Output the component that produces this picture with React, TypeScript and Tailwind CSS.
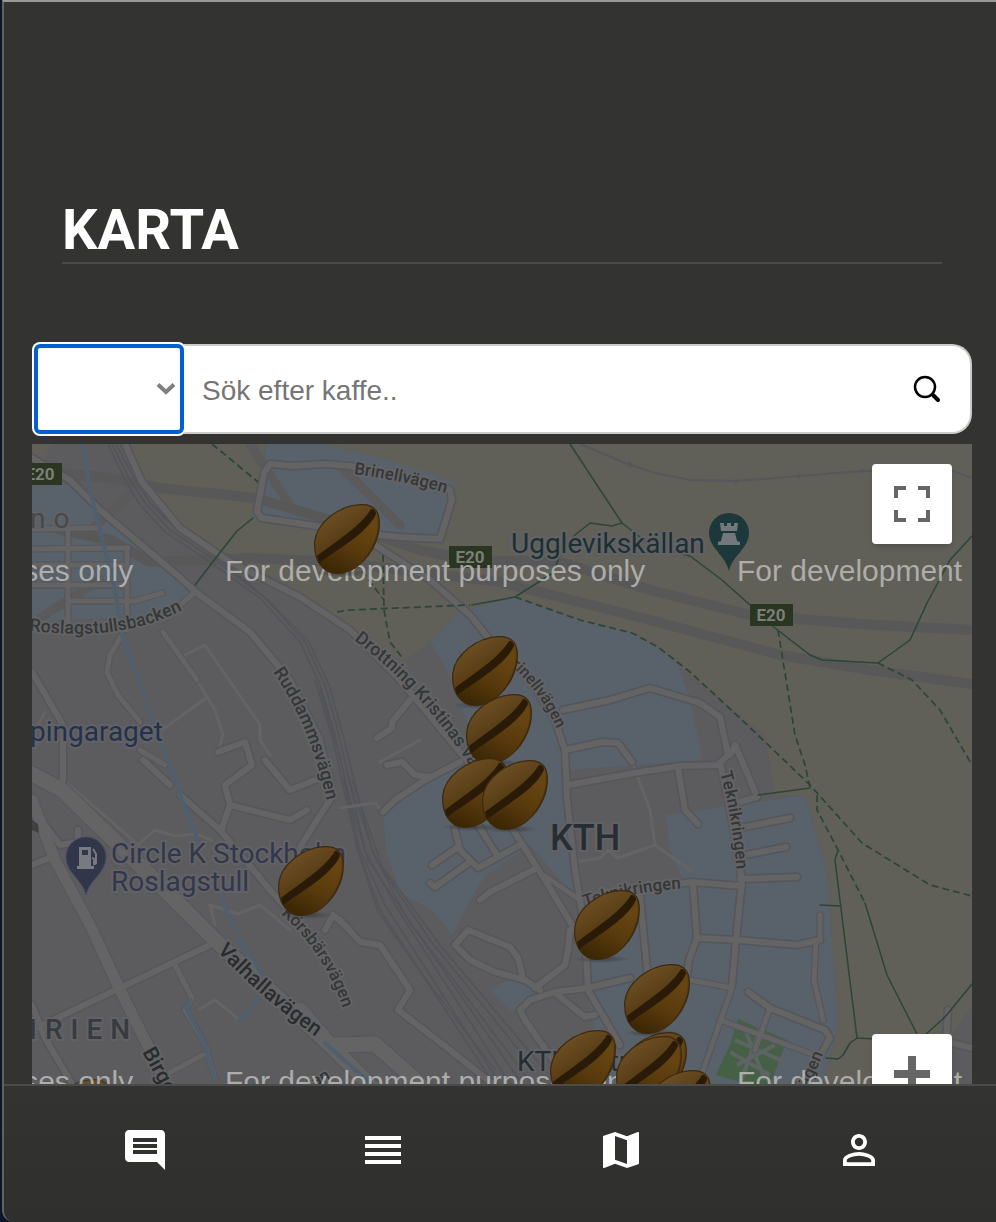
import React from "react";
import { MdComment, MdMap, MdPersonOutline, MdReorder } from "react-icons/md";

const CAMPUS = [
  "32,485 75,484 195,590 180,603 150,616 32,622",
  "266,444 325,444 345,450 380,457 457,482 443,545 350,534 250,520 262,480",
  "430,641 460,612 515,597 580,620 632,633 658,647 678,665 690,700 703,760 566,770 585,905 560,880 530,845 486,875 473,895 452,935 432,910 400,893 386,850 383,813 430,777 475,750 455,685",
  "490,990 512,978 540,992 512,1012",
  "666,815 805,795 828,877 838,1027 822,1084 600,1084 590,1000 580,930 580,900 650,890 683,880 670,850",
];

const PARK = [
  "128,444 266,444 262,480 250,520 350,534 443,545 457,482 345,450 325,444 972,444 972,1005 945,1045 940,1084 822,1084 838,1027 828,877 805,795 775,795 765,735 735,712 678,665 658,647 515,597 460,612 430,641 404,662 345,625 300,592 178,528 142,482",
  "32,444 50,444 45,462 32,458",
];

const HIGHWAYS = [
  "60,473 110,478 160,488 255,498 330,520 420,550 470,560 560,562 650,590 750,615 860,624 972,630",
  "60,530 110,540 150,562 250,558 340,562 400,570 500,582 650,620 780,655 870,670 972,684",
];

const FOOT_HIGHWAYS = ["250,444 290,505", "340,466 400,525", "40,618 100,580", "85,535 130,495"];

const RAILS = [
  "108,444 125,480 140,505 165,532 210,562 260,598 300,642 320,685 335,735 345,780 360,850 385,905 500,1084",
  "112,444 129,478 145,503 170,530 215,560 265,598 305,642 325,685 339,735 349,780 365,850 395,905 510,1084",
  "116,444 134,478 150,503 175,528 220,560 268,600 309,642 329,685 343,735 354,780 372,850 405,915 522,1084",
  "320,690 338,750 350,800 368,860 412,925 532,1084",
  "315,680 333,740 344,790 358,850 380,910 488,1075",
  "344,780 356,845 378,912 430,985 495,1070",
  "349,780 376,860 430,940 535,1070",
  "352,780 382,866 440,945 545,1070",
];

const WIDE_ROADS = [
  "32,774 62,790 95,822 160,885 215,940 330,1045 375,1090",
  "300,1010 330,1045 375,1044 420,1084",
];

const AVENUES = ["32,800 55,860 90,925 120,990 150,1050 168,1090"];

const ROADS = [
  "32,458 70,480 100,510 177,575 197,593 250,632 290,680 320,740 333,795 300,847",
  "125,444 142,482 180,528 230,562 300,597 350,630 400,680 475,770 510,825 545,880 575,930",
  "350,466 325,464 292,466 270,464 264,473 257,512 262,518 310,525 350,532 400,537 440,539 452,500 450,490 440,485 350,466",
  "375,545 430,580 470,615 490,640 530,680 555,720 565,750 567,800 575,870 585,930 588,990 620,1045",
  "32,808 60,845 78,842 78,830",
  "32,865 52,857",
  "32,1030 120,988 210,945",
  "180,795 220,830 270,890 320,945",
  "143,760 170,785",
  "222,828 230,805 225,785 252,765 245,742 218,752",
  "230,805 290,820 307,810",
  "265,760 290,790 315,780",
  "563,710 610,700 650,688 700,703 720,717 728,755 718,765 680,766 640,772 568,785",
  "565,750 603,742 618,743 632,762",
  "720,762 732,820 742,880 736,940 732,985",
  "740,828 790,818",
  "740,856 786,847",
  "740,879 797,877",
  "675,885 690,882 742,886",
  "693,885 697,938 689,960 685,990",
  "697,938 738,940 797,945 820,940",
  "748,992 770,1008 825,1030 830,1038 815,1065 800,1084",
  "678,768 685,810 698,824",
  "730,755 735,745 748,775 757,797 740,802",
  "340,920 360,942 380,945 410,990 398,1010 450,1050 500,1090",
  "455,945 468,930 510,947 518,958 523,978",
  "455,945 470,960 495,972 525,980 540,990",
  "570,930 568,950 565,965 535,988",
  "630,978 588,988 555,992 530,1000 520,1010 525,1020 560,1070",
  "555,993 585,1017 595,1015",
  "480,900 490,892 537,868",
  "430,883 435,887 470,862",
  "432,865 458,847",
  "455,830 460,850 478,868 520,845",
  "475,820 497,855",
  "640,895 647,970",
  "410,700 392,722 392,728 377,738",
  "387,765 402,762 415,775 430,777",
  "383,812 395,800 425,780 460,762",
  "325,930 333,915 350,930",
  "32,672 63,725 63,780",
  "32,1005 45,1038 72,1084",
  "945,1060 948,1010",
  "952,1043 972,1048",
];

const STREETS = [
  "32,529 97,528",
  "32,549 128,548",
  "32,565 125,565",
  "32,585 127,585",
  "70,601 135,601 162,593",
  "68,529 68,622",
  "127,548 127,630",
  "195,592 165,618",
  "122,635 110,655 107,672 118,695 140,722",
  "163,632 197,680",
  "140,750 165,765",
  "175,965 192,998 185,1010 203,1040 215,1078",
  "203,1055 165,1075",
  "816,940 814,980 823,1020",
  "820,940 820,915",
  "690,980 732,988 720,1022 705,1065 700,1078",
  "720,1020 820,1057",
  "770,1008 755,1050",
  "545,876 580,900",
];

const ALLEYS = [
  "185,655 205,645 260,725 260,740 270,755",
  "197,680 215,710 223,735 218,752",
  "206,698 162,730",
  "65,782 110,820 138,845 155,830 175,836 195,834 212,840",
  "340,808 375,803 383,812",
  "632,762 650,810 655,845 690,870",
  "575,862 600,858 608,850 618,858 655,845",
  "210,905 215,925",
  "210,905 238,914 260,905 290,930",
  "200,1009 215,1000 240,1020 260,998",
  "45,712 32,735",
  "380,762 420,740",
];

const WATER = [
  "82,444 90,490 115,590 122,635 145,697",
  "147,705 170,765 182,800 200,845",
  "220,895 235,930",
  "237,938 265,978",
  "240,1020 260,998",
  "190,1000 186,1008 203,1040 215,1078",
  "325,1043 378,1090",
];

const TRAILS = [
  "570,444 622,523 650,545 690,556 722,580 750,605 775,628 810,655 822,660 878,663 910,640 927,603 950,560 972,536",
  "472,605 515,597 553,573 562,550 575,535 590,523 612,526 622,523",
  "865,903 887,975 920,1040",
  "838,850 835,860 857,1038 875,1039",
  "820,905 840,906",
  "758,795 810,788",
  "826,1058 838,1059 843,1055 850,1043 857,1038",
  "925,1035 945,1017 972,984",
  "253,518 237,531 222,550 195,585",
];

const DASHED_TRAILS = [
  "515,597 580,620 632,633 658,647 690,672 740,718 810,785 862,843 930,885 972,896",
  "778,630 795,735 805,765 810,787",
  "878,663 912,680 940,710 972,765",
  "817,795 817,810 838,850 865,903",
  "212,444 258,482",
  "337,612 350,610 470,605",
  "383,555 384,610 390,642 404,660",
  "355,562 384,600",
];

const BEANS: [number, number][] = [
  [314, 504],
  [452, 636],
  [466, 694],
  [442, 758],
  [482, 760],
  [278, 846],
  [574, 890],
  [624, 964],
  [550, 1030],
  [621, 1032],
  [616, 1036],
  [645, 1070],
];

function Lines({ items, ...rest }: { items: string[] } & React.SVGProps<SVGGElement>) {
  return (
    <g fill="none" strokeLinecap="round" strokeLinejoin="round" {...rest}>
      {items.map((points) => (
        <polyline key={points} points={points} />
      ))}
    </g>
  );
}

function Shield({ x, y }: { x: number; y: number }) {
  return (
    <g>
      <rect x={x} y={y} width="43" height="22" fill="#2a3522" />
      <text x={x + 21} y={y + 17} textAnchor="middle" fontSize="17" fontWeight="700" fill="#7c7f78">
        E20
      </text>
    </g>
  );
}

function StreetMap() {
  return (
    <svg
      className="absolute inset-0 h-full w-full font-[Roboto,sans-serif]"
      viewBox="32 444 940 640"
      preserveAspectRatio="xMidYMin slice"
      role="img"
      aria-label="Karta"
    >
      <defs>
        <linearGradient id="bean-light" x1="0.2" y1="0.1" x2="0.7" y2="0.9">
          <stop offset="0" stopColor="#6f5026" />
          <stop offset="0.45" stopColor="#5a3f16" />
          <stop offset="1" stopColor="#402a08" />
        </linearGradient>
        <linearGradient id="bean-dark" x1="0.8" y1="0.2" x2="0.4" y2="1">
          <stop offset="0" stopColor="#664512" />
          <stop offset="0.5" stopColor="#593a0d" />
          <stop offset="1" stopColor="#3d2806" />
        </linearGradient>
        <radialGradient id="bean-shadow">
          <stop offset="0" stopColor="#222" stopOpacity="0.5" />
          <stop offset="1" stopColor="#222" stopOpacity="0" />
        </radialGradient>
        <g id="bean">
          <ellipse cx="28" cy="69" rx="28" ry="4" fill="url(#bean-shadow)" />
          <path
            d="M46 .7C56 0 63 3 65 14C67 30 60 48 46 60C36 69 22 72 13 67C4 61 0 51 .7 38C3 18 25 2 46 .7Z"
            fill="url(#bean-light)"
            stroke="#3d2a10"
            strokeWidth="1.2"
          />
          <path d="M62 8C66 20 64 40 46 60C36 69 22 72 13 67C8 64 5 60 3 55C30 39 50 28 62 8Z" fill="url(#bean-dark)" />
          <path d="M57 5C48 20 30 32 3 52L5 59C34 39 54 27 62 10C62 7 60 5 57 5Z" fill="#2a1b08" />
        </g>
        <path id="road-brinell-n" d="M354 474Q400 480 450 494" />
        <path id="road-brinell-s" d="M511 666Q541 692 558 732" />
        <path id="road-roslagstull" d="M29 631C80 636 135 638 194 604" />
        <path id="road-ruddamm" d="M273 672Q312 728 328 807" />
        <path id="road-drottning" d="M354 640C403 677 438 715 486 790" />
        <path id="road-korsbar" d="M281 914Q327 954 347 1020" />
        <path id="road-valhalla" d="M217 951Q262 1000 326 1044" />
        <path id="road-birger" d="M142 1052Q154 1073 184 1130" />
        <path id="road-teknik-e" d="M720 773Q732 813 737 875" />
        <path id="road-teknik-s" d="M585 907Q630 892 686 888" />
      </defs>

      <rect x="32" y="444" width="940" height="640" fill="#5c5c5e" />
      {PARK.map((points) => (
        <polygon key={points} points={points} fill="#605f58" />
      ))}
      {CAMPUS.map((points) => (
        <polygon key={points} points={points} fill="#59616a" />
      ))}
      <path d="M738 1019L787 1040L768 1090L716 1075L730 1045Z" fill="#456045" />
      <path
        d="M735 1040L785 1062M760 1028L740 1084M737 1065L775 1045M730 1052L770 1075M745 1030L765 1080"
        stroke="#5d6464"
        strokeWidth="4"
        fill="none"
      />

      <Lines items={FOOT_HIGHWAYS} stroke="#5a5a5b" strokeWidth={9} />
      <Lines items={HIGHWAYS} stroke="#585859" strokeWidth={10} />
      <Lines items={RAILS} stroke="#535459" strokeWidth={1.5} />
      <Lines
        items={["580,444 625,463 655,473 690,480 736,481 862,471 950,470 972,478"]}
        stroke="#56565c"
        strokeWidth={2}
      />
      <path d="M630 461v7M736 478v7M799 473v6M862 468v6" stroke="#56565c" strokeWidth="1.5" />

      <Lines items={ALLEYS} stroke="#646465" strokeWidth={3} />
      <Lines items={STREETS} stroke="#55555c" strokeWidth={7} />
      <Lines items={ROADS} stroke="#55555c" strokeWidth={9} />
      <Lines items={AVENUES} stroke="#55555c" strokeWidth={13} />
      <Lines items={WIDE_ROADS} stroke="#55555c" strokeWidth={17} />
      <Lines items={STREETS} stroke="#646465" strokeWidth={5} />
      <Lines items={ROADS} stroke="#646465" strokeWidth={6} />
      <Lines items={AVENUES} stroke="#646465" strokeWidth={11} />
      <Lines items={WIDE_ROADS} stroke="#646465" strokeWidth={15} />
      <Lines items={WATER} stroke="#4f5f6e" strokeWidth={4} />
      <Lines items={TRAILS} stroke="#2b4536" strokeWidth={1.5} />
      <Lines items={DASHED_TRAILS} stroke="#2b4536" strokeWidth={1.7} strokeDasharray="7 4" strokeLinecap="butt" />
      <path d="M32 820l6 4l1 9l-7-3z" fill="#3f4041" />

      <Shield x={19} y={463} />
      <Shield x={449} y={546} />
      <Shield x={750} y={604} />

      <g
        fill="#343638"
        stroke="#636365"
        strokeWidth="4"
        strokeLinejoin="round"
        paintOrder="stroke"
        fontSize="17"
        fontWeight="500"
      >
        <text><textPath href="#road-brinell-n">Brinellvägen</textPath></text>
        <text><textPath href="#road-brinell-s" fontSize="16">rinellvägen</textPath></text>
        <text><textPath href="#road-roslagstull" fontSize="18">Roslagstullsbacken</textPath></text>
        <text><textPath href="#road-ruddamm" fontSize="18">Ruddammsvägen</textPath></text>
        <text><textPath href="#road-drottning" fontSize="18">Drottning Kristinas väg</textPath></text>
        <text><textPath href="#road-korsbar">Körsbärsvägen</textPath></text>
        <text><textPath href="#road-valhalla" fontSize="21" fill="#292b2d">Valhallavägen</textPath></text>
        <text><textPath href="#road-birger" fontSize="21" fill="#292b2d">Birger</textPath></text>
        <text><textPath href="#road-teknik-e">Teknikringen</textPath></text>
        <text><textPath href="#road-teknik-s">Teknikringen</textPath></text>
        <text transform="translate(802 1104) rotate(-67)">svägen</text>
        <text transform="translate(302 1094) rotate(-28)">stan</text>
      </g>

      <g stroke="#626266" strokeWidth="4" strokeLinejoin="round" paintOrder="stroke" fontSize="28">
        <text x="511" y="553" fill="#1c3032">Ugglevikskällan</text>
        <text x="30" y="741" fill="#23324a">pingaraget</text>
        <text x="111" y="863" fill="#33374c">Circle K Stockholm</text>
        <text x="111" y="891" fill="#33374c">Roslagstull</text>
        <text x="30" y="528" fill="#46484c" letterSpacing="8">no</text>
        <text x="29" y="1039" fill="#373b40" fontWeight="500" letterSpacing="8">IRIEN</text>
        <text x="550" y="850" fill="#262e33" fontSize="36" fontWeight="500">KTH</text>
        <text x="517" y="1071" fill="#262e33">KTH Entré</text>
      </g>

      <path d="M729 571C726 556 709 548 709 533A20 20 0 0 1 749 533C749 548 732 556 729 571Z" fill="#1d383b" />
      <path d="M720 523h4v3h3v-3h4v3h3v-3h4l-1 8h-16zM723 533h12l2 8l3 1v3h-22v-3l3-1z" fill="#73797a" />
      <path d="M86 895C83 880 66 873 66 857A20 20 0 0 1 106 857C106 873 89 880 86 895Z" fill="#31364b" stroke="#464961" />
      <path d="M79 847h12v19h3v3H77v-3h2zM82 850v5h6v-5z" fillRule="evenodd" fill="#777a80" />
      <path d="M92 858q3 0 2 4t2 1v-9l-3-5" stroke="#777a80" strokeWidth="2" fill="none" />

      <use href="#bean" x="46" y="1079" opacity="0.7" />

      <g
        className="font-['Liberation_Sans',Arial,sans-serif]"
        fontSize="30"
        fill="#c8c8c6"
        fillOpacity="0.75"
      >
        {[581, 1092].map((y) =>
          [-287, 225, 737].map((x) => (
            <text key={`${x}-${y}`} x={x} y={y}>
              For development purposes only
            </text>
          )),
        )}
      </g>

      {BEANS.map(([x, y]) => (
        <use key={`${x}-${y}`} href="#bean" x={x} y={y} />
      ))}
    </svg>
  );
}

const NAV = [
  { label: "Inlägg", href: "#inlagg", Icon: MdComment },
  { label: "Lista", href: "#lista", Icon: MdReorder },
  { label: "Karta", href: "#karta", Icon: MdMap },
  { label: "Profil", href: "#profil", Icon: MdPersonOutline },
];

export default function App() {
  return (
    <div className="flex min-h-screen flex-col bg-[#0c1626] pl-[2px]">
      <div className="flex flex-1 flex-col overflow-hidden rounded-bl-xl border-t-2 border-l-2 border-t-[#999998] border-l-[#626261] bg-[#333331]">
        <main className="flex flex-1 flex-col pr-6 pl-7">
          <h1 className="mx-[30px] mt-[196px] border-b-2 border-[#4a4a49] font-[Roboto,sans-serif] text-[56px] leading-[64px] font-bold text-white">
            KARTA
          </h1>

          <form className="mt-20 flex h-[90px] pl-[2px]" onSubmit={(e) => e.preventDefault()}>
            <div className="relative z-10 flex w-[150px]">
              <select
                aria-label="Kategori"
                className="w-full appearance-none rounded-md border-4 border-[#0060d0] bg-white ring-2 ring-white outline-none"
              />
              <svg className="pointer-events-none absolute top-9 right-2 h-5 w-5" viewBox="0 0 20 20" aria-hidden="true">
                <path d="M2 4.500l8 7.500l8-7.500" fill="none" stroke="#808080" strokeWidth="4" />
              </svg>
            </div>
            <div className="flex flex-1 items-center rounded-r-[20px] border-y-2 border-r-2 border-[#cbcbc9] bg-white">
              <input
                type="text"
                aria-label="Sök efter kaffe"
                placeholder="Sök efter kaffe.."
                className="h-full min-w-0 flex-1 bg-transparent pt-1 pl-[18px] font-['Liberation_Sans',Arial,sans-serif] text-[28px] text-black outline-none placeholder:text-[#757575]"
              />
              <button type="submit" aria-label="Sök" className="mr-[29px] flex">
                <svg className="h-7 w-7" viewBox="0 0 28 28" fill="none" stroke="#000" aria-hidden="true">
                  <circle cx="12" cy="12" r="10" strokeWidth="2.500" />
                  <path d="M19 19l2 2" strokeWidth="3" />
                  <path d="M20.500 20.500l4.500 4.500" strokeWidth="4" strokeLinecap="round" />
                </svg>
              </button>
            </div>
          </form>

          <section className="relative mt-[10px] min-h-[400px] flex-1 overflow-hidden bg-[#5c5c5e]">
            <StreetMap />
            <button
              type="button"
              aria-label="Helskärm"
              className="absolute top-5 right-5 flex h-20 w-20 items-center justify-center rounded-[4px] bg-white shadow-md"
            >
              <svg className="h-9 w-9" viewBox="0 0 18 18" fill="#666" aria-hidden="true">
                <path d="M0 0v6h2V2h4V0H0zM16 0h-4v2h4v4h2V0h-2zM16 16h-4v2h6v-6h-2v4zM2 12H0v6h6v-2H2v-4z" />
              </svg>
            </button>
            <button
              type="button"
              aria-label="Zooma in"
              className="absolute right-5 -bottom-[30px] flex h-20 w-20 items-center justify-center rounded-[4px] bg-white shadow-md"
            >
              <svg className="h-9 w-9" viewBox="0 0 18 18" fill="#666" aria-hidden="true">
                <path d="M18 7h-7V0H7v7H0v4h7v7h4v-7h7z" />
              </svg>
            </button>
          </section>
        </main>

        <nav className="grid grid-cols-4 items-center border-t-2 border-[#4b4b4a] bg-linear-to-b from-[#333331] to-[#2f2f2e] pt-10 pr-[18px] pb-12 pl-[22px]">
          {NAV.map(({ label, href, Icon }) => (
            <a key={label} href={href} aria-label={label} className="flex justify-center text-white">
              <Icon className="h-12 w-12" />
            </a>
          ))}
        </nav>
      </div>
    </div>
  );
}
